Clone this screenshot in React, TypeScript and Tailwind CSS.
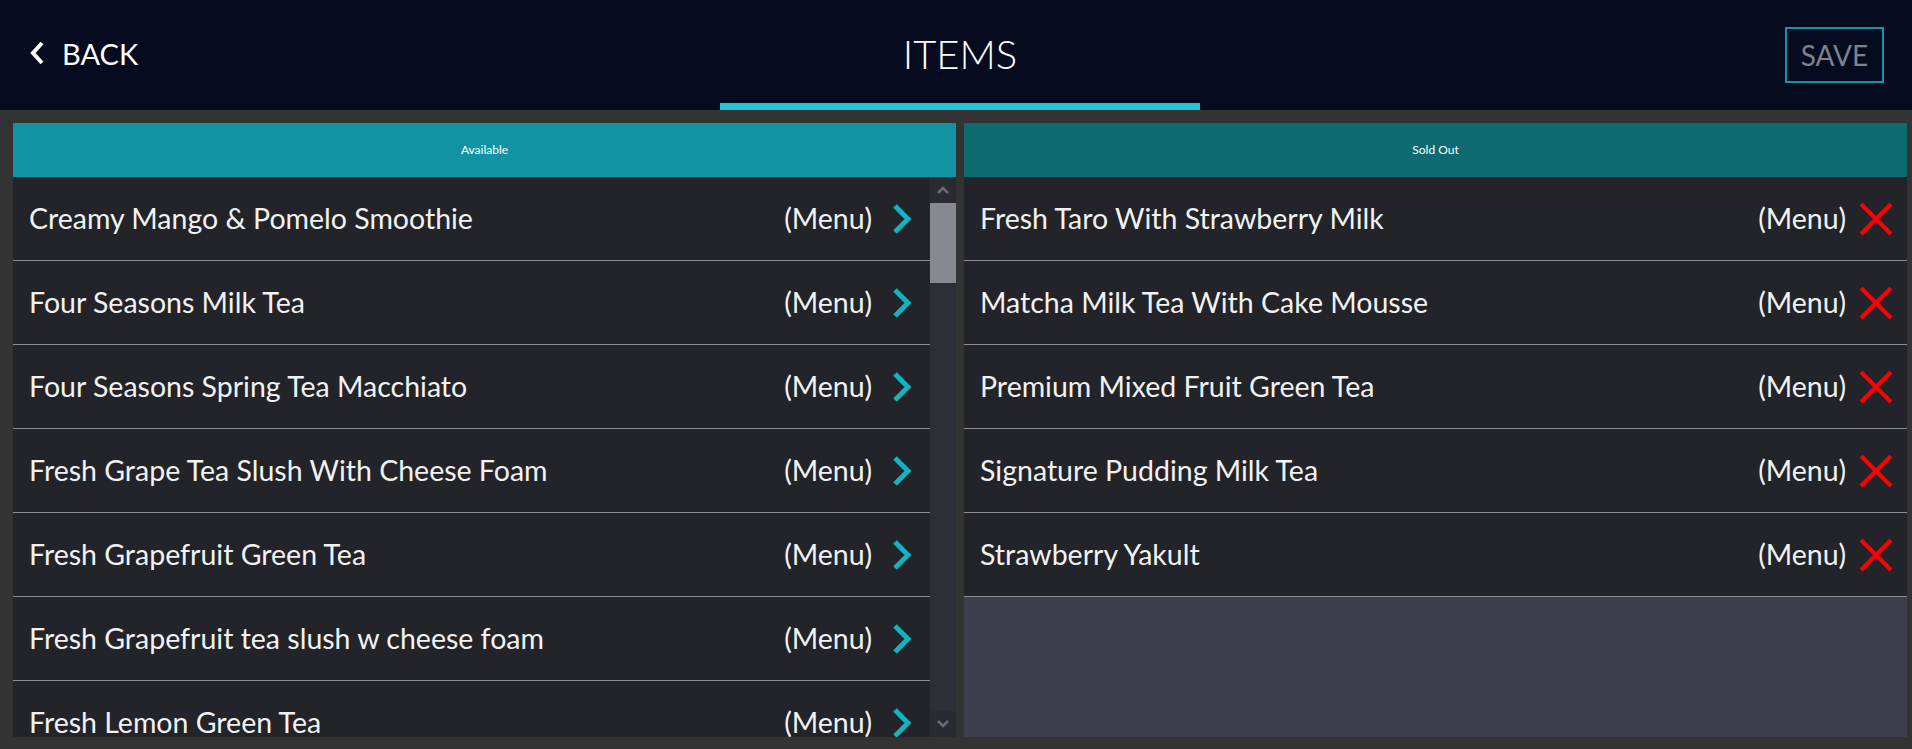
const available = [
  "Creamy Mango & Pomelo Smoothie",
  "Four Seasons Milk Tea",
  "Four Seasons Spring Tea Macchiato",
  "Fresh Grape Tea Slush With Cheese Foam",
  "Fresh Grapefruit Green Tea",
  "Fresh Grapefruit tea slush w cheese foam",
  "Fresh Lemon Green Tea",
  "Fresh Mango Green Tea",
  "Fresh Orange Green Tea",
];

const soldOut = [
  "Fresh Taro With Strawberry Milk",
  "Matcha Milk Tea With Cake Mousse",
  "Premium Mixed Fruit Green Tea",
  "Signature Pudding Milk Tea",
  "Strawberry Yakult",
];

const font = "font-['Lato','Liberation_Sans',sans-serif]";

const Chevron = () => (
  <svg width="20" height="30" viewBox="0 0 20 30" className="ml-[20px] mr-[18px] shrink-0">
    <path d="M3 2 L16 15 L3 28" fill="none" stroke="#13b3c0" strokeWidth="5" />
  </svg>
);

const Cross = () => (
  <svg width="34" height="34" viewBox="0 0 34 34" className="ml-[13px] mr-[14px] shrink-0">
    <path d="M2 2 L32 32 M32 2 L2 32" fill="none" stroke="#ff0000" strokeWidth="4" />
  </svg>
);

const Row = ({ name, icon }: { name: string; icon: any }) => (
  <div className="flex h-[84px] shrink-0 items-center border-b border-[#8d8d8f] bg-[#232429] pl-4 text-[28.5px] text-[#f2f2f2]">
    <span className="flex-1 truncate">{name}</span>
    <span>(Menu)</span>
    {icon}
  </div>
);

export default function App() {
  return (
    <div className={`${font} flex h-[749px] w-[1912px] flex-col bg-[#333333]`}>
      <header className="grid h-[110px] grid-cols-[720px_480px_1fr] bg-[#060b1f] text-white">
        <div className="flex items-center pl-[29px] pb-1">
          <svg width="16" height="24" viewBox="0 0 16 24">
            <path d="M13 2 L4 12 L13 22" fill="none" stroke="#ffffff" strokeWidth="4" />
          </svg>
          <span className="ml-[17px] text-[29px] leading-none">BACK</span>
        </div>
        <div className="flex flex-col">
          <div className="flex flex-1 items-center justify-center pt-1 text-[40px] font-light leading-none">
            ITEMS
          </div>
          <div className="h-[7px] bg-[#26c4cf]" />
        </div>
        <div className="flex items-center justify-end pr-[28px]">
          <button className="flex h-[56px] w-[99px] items-center justify-center border-2 border-[#1596a6] text-[28px] text-[#7f818e]">
            SAVE
          </button>
        </div>
      </header>

      <main className="flex min-h-0 flex-1 gap-2 pt-[13px] pb-[12px] pl-[13px] pr-[5px]">
        <section className="flex min-w-0 flex-1 flex-col">
          <div className="flex h-[54px] shrink-0 items-center justify-center bg-[#1193a3] text-[12px] text-white">
            Available
          </div>
          <div className="flex min-h-0 flex-1">
            <div className="flex min-w-0 flex-1 flex-col overflow-hidden">
              {available.map((n) => (
                <Row key={n} name={n} icon={<Chevron />} />
              ))}
            </div>
            <div className="flex w-[26px] flex-col bg-[#2d2f37]">
              <div className="flex h-[26px] items-center justify-center bg-[#2a2b30]">
                <svg width="12" height="8" viewBox="0 0 12 8">
                  <path d="M1 7 L6 2 L11 7" fill="none" stroke="#6b6c72" strokeWidth="2.5" />
                </svg>
              </div>
              <div className="h-[80px] bg-[#88898e]" />
              <div className="flex-1" />
              <div className="flex h-[26px] items-center justify-center bg-[#2a2b30]">
                <svg width="12" height="8" viewBox="0 0 12 8">
                  <path d="M1 1 L6 6 L11 1" fill="none" stroke="#6b6c72" strokeWidth="2.5" />
                </svg>
              </div>
            </div>
          </div>
        </section>

        <section className="flex min-w-0 flex-1 flex-col">
          <div className="flex h-[54px] shrink-0 items-center justify-center bg-[#0d6a70] text-[12px] text-white">
            Sold Out
          </div>
          <div className="flex min-h-0 flex-1 flex-col bg-[#3d3f4c]">
            {soldOut.map((n) => (
              <Row key={n} name={n} icon={<Cross />} />
            ))}
          </div>
        </section>
      </main>
    </div>
  );
}
